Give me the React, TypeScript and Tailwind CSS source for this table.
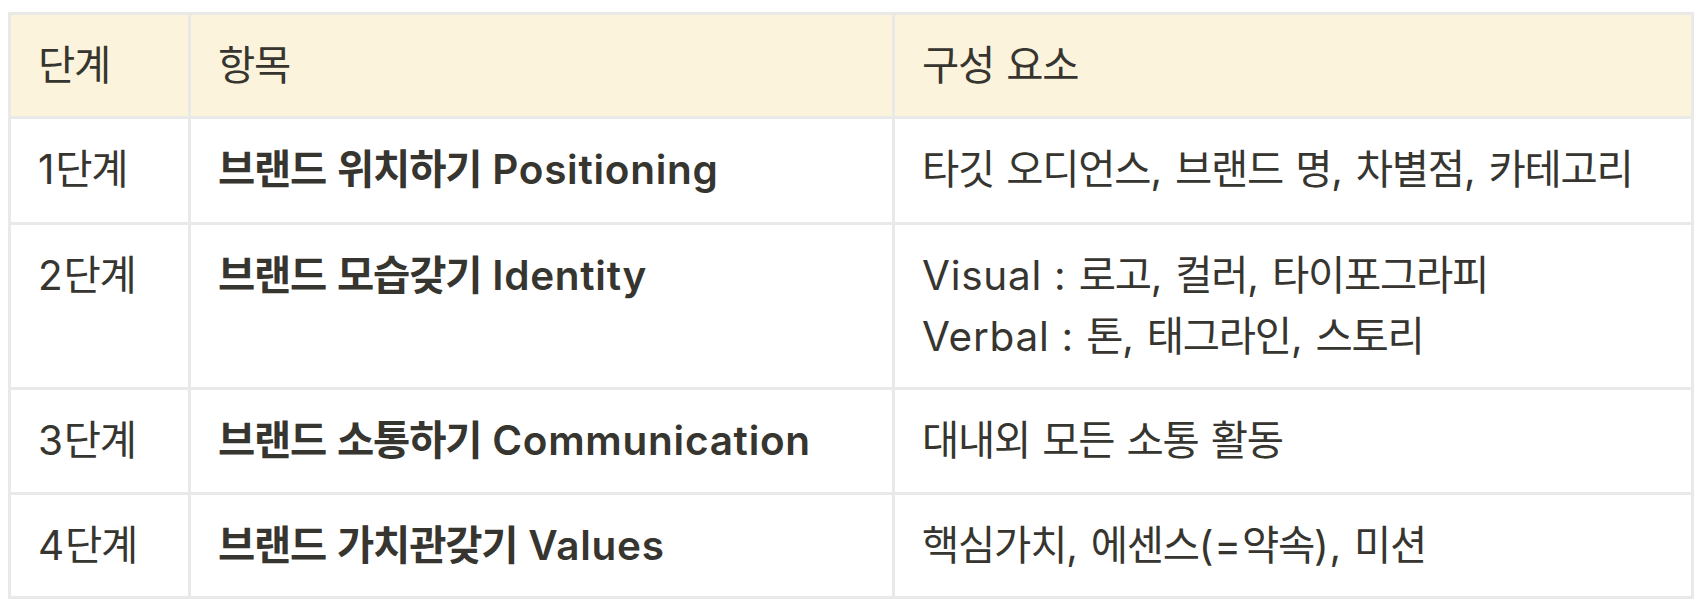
import React from "react";

const HANGUL = /([\u1100-\u11FF\u3130-\u318F\uAC00-\uD7AF]+)/;

function T({ text }: { text: string }) {
  const parts = text.split(HANGUL);
  return (
    <>
      {parts.map((p, i) =>
        HANGUL.test(p) ? (
          <span key={i} className="tracking-[-0.03em]">
            {p}
          </span>
        ) : (
          <span key={i} className="tracking-[0.018em]">
            {p}
          </span>
        )
      )}
    </>
  );
}

type Row = { step: string; item: string; comps: string[] };

const rows: Row[] = [
  { step: "1단계", item: "브랜드 위치하기 Positioning", comps: ["타깃 오디언스, 브랜드 명, 차별점, 카테고리"] },
  { step: "2단계", item: "브랜드 모습갖기 Identity", comps: ["Visual : 로고, 컬러, 타이포그라피", "Verbal : 톤, 태그라인, 스토리"] },
  { step: "3단계", item: "브랜드 소통하기 Communication", comps: ["대내외 모든 소통 활동"] },
  { step: "4단계", item: "브랜드 가치관갖기 Values", comps: ["핵심가치, 에센스(=약속), 미션"] },
];

export default function App() {
  const cell = "px-[27px] pt-[20px] leading-[61px] whitespace-nowrap";
  return (
    <div
      className="min-h-[608px] w-[1702px] bg-white pl-[8px] pt-[12px] text-[40.5px] text-[#37352f]"
      style={{ fontFamily: 'Inter, "Noto Sans CJK KR", sans-serif' }}
    >
      <div className="grid w-[1686px] grid-cols-[177px_701px_796px] grid-rows-[101px_103px_162px_102px_101px] gap-[3px] bg-[#e9e9e7] p-[3px]">
        <div className={`${cell} bg-[#fbf3db]`}>
          <T text="단계" />
        </div>
        <div className={`${cell} bg-[#fbf3db]`}>
          <T text="항목" />
        </div>
        <div className={`${cell} bg-[#fbf3db]`}>
          <T text="구성 요소" />
        </div>
        {rows.map((r) => (
          <React.Fragment key={r.step}>
            <div className={`${cell} bg-white`}>
              <T text={r.step} />
            </div>
            <div className={`${cell} bg-white font-semibold`}>
              <T text={r.item} />
            </div>
            <div className={`${cell} bg-white`}>
              {r.comps.map((c) => (
                <div key={c}>
                  <T text={c} />
                </div>
              ))}
            </div>
          </React.Fragment>
        ))}
      </div>
    </div>
  );
}
